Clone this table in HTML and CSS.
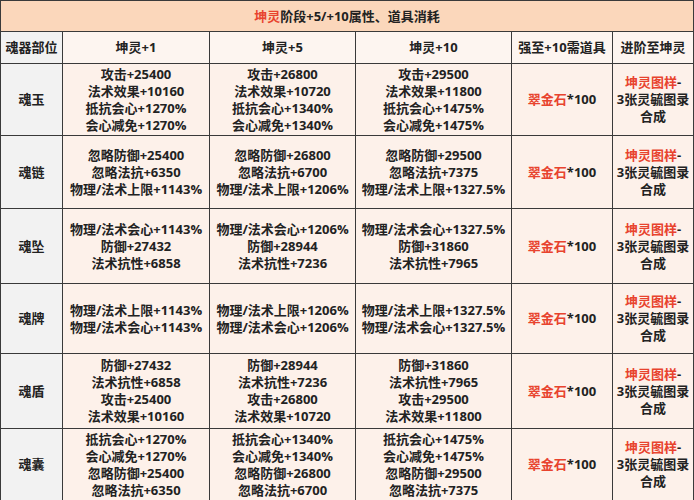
FILE: index.html
```html
<!DOCTYPE html>
<html lang="zh">
<head>
<meta charset="utf-8">
<link rel="stylesheet" href="styles.css">
</head>
<body>
<table class="tbl">
  <colgroup>
    <col class="c1"><col class="c2"><col class="c3"><col class="c4"><col class="c5"><col class="c6">
  </colgroup>
  <tr class="title"><td colspan="6"><span class="red">坤灵</span>阶段+5/+10属性、道具消耗</td></tr>
  <tr class="head">
    <td class="part">魂器部位</td><td>坤灵+1</td><td>坤灵+5</td><td>坤灵+10</td><td>强至+10需道具</td><td>进阶至坤灵</td>
  </tr>
  <tr class="r1">
    <td class="part">魂玉</td>
    <td>攻击+25400<br>法术效果+10160<br>抵抗会心+1270%<br>会心减免+1270%</td>
    <td>攻击+26800<br>法术效果+10720<br>抵抗会心+1340%<br>会心减免+1340%</td>
    <td>攻击+29500<br>法术效果+11800<br>抵抗会心+1475%<br>会心减免+1475%</td>
    <td><span class="red">翠金石</span>*100</td>
    <td><span class="red">坤灵图样</span>-<br>3张灵毓图录<br>合成</td>
  </tr>
  <tr class="r2">
    <td class="part">魂链</td>
    <td>忽略防御+25400<br>忽略法抗+6350<br>物理/法术上限+1143%</td>
    <td>忽略防御+26800<br>忽略法抗+6700<br>物理/法术上限+1206%</td>
    <td>忽略防御+29500<br>忽略法抗+7375<br>物理/法术上限+1327.5%</td>
    <td><span class="red">翠金石</span>*100</td>
    <td><span class="red">坤灵图样</span>-<br>3张灵毓图录<br>合成</td>
  </tr>
  <tr class="r3">
    <td class="part">魂坠</td>
    <td>物理/法术会心+1143%<br>防御+27432<br>法术抗性+6858</td>
    <td>物理/法术会心+1206%<br>防御+28944<br>法术抗性+7236</td>
    <td>物理/法术会心+1327.5%<br>防御+31860<br>法术抗性+7965</td>
    <td><span class="red">翠金石</span>*100</td>
    <td><span class="red">坤灵图样</span>-<br>3张灵毓图录<br>合成</td>
  </tr>
  <tr class="r4">
    <td class="part">魂牌</td>
    <td>物理/法术上限+1143%<br>物理/法术会心+1143%</td>
    <td>物理/法术上限+1206%<br>物理/法术会心+1206%</td>
    <td>物理/法术上限+1327.5%<br>物理/法术会心+1327.5%</td>
    <td><span class="red">翠金石</span>*100</td>
    <td><span class="red">坤灵图样</span>-<br>3张灵毓图录<br>合成</td>
  </tr>
  <tr class="r5">
    <td class="part">魂盾</td>
    <td>防御+27432<br>法术抗性+6858<br>攻击+25400<br>法术效果+10160</td>
    <td>防御+28944<br>法术抗性+7236<br>攻击+26800<br>法术效果+10720</td>
    <td>防御+31860<br>法术抗性+7965<br>攻击+29500<br>法术效果+11800</td>
    <td><span class="red">翠金石</span>*100</td>
    <td><span class="red">坤灵图样</span>-<br>3张灵毓图录<br>合成</td>
  </tr>
  <tr class="r6">
    <td class="part">魂囊</td>
    <td>抵抗会心+1270%<br>会心减免+1270%<br>忽略防御+25400<br>忽略法抗+6350</td>
    <td>抵抗会心+1340%<br>会心减免+1340%<br>忽略防御+26800<br>忽略法抗+6700</td>
    <td>抵抗会心+1475%<br>会心减免+1475%<br>忽略防御+29500<br>忽略法抗+7375</td>
    <td><span class="red">翠金石</span>*100</td>
    <td><span class="red">坤灵图样</span>-<br>3张灵毓图录<br>合成</td>
  </tr>
</table>
</body>
</html>
```
FILE: styles.css
```css
html, body {
  margin: 0;
  padding: 0;
  background: #ffffff;
}
.tbl {
  width: 693px;
  border-collapse: collapse;
  table-layout: fixed;
  font-family: "Open Sans", "Noto Sans CJK SC", sans-serif;
  font-size: 13px;
  font-weight: 700;
  line-height: 17px;
  color: #222222;
}
.c1 { width: 62px; }
.c2 { width: 147px; }
.c3 { width: 146px; }
.c4 { width: 156px; }
.c5 { width: 101px; }
.c6 { width: 81px; }
.tbl td {
  border: 1px solid #3a3a3a;
  text-align: center;
  vertical-align: middle;
  padding: 0;
  background: #fdf1ea;
  white-space: nowrap;
}
.tbl td.part {
  background: #f2f2f2;
}
.title td {
  background: #fbd7bb;
  height: 30px;
}
.head td {
  background: #fdf5f0;
  height: 31px;
}
.r1 td { height: 71px; }
.r2 td { height: 72px; }
.r3 td { height: 74px; }
.r4 td { height: 69px; }
.r5 td { height: 74px; }
.r6 td { height: 71px; }
.red {
  color: #e8432e;
}
```
